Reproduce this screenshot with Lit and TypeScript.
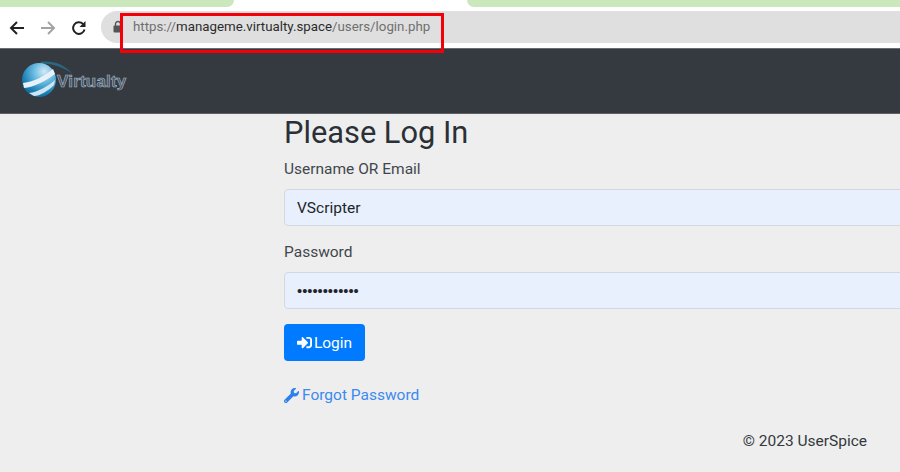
import { LitElement, html, css } from "lit";
import { customElement } from "lit/decorators.js";

@customElement("app-root")
export class AppRoot extends LitElement {
  static styles = css`
    :host {
      display: flex;
      flex-direction: column;
      width: 900px;
      height: 472px;
      overflow: hidden;
      position: relative;
      background: #eeeeee;
      font-family: Roboto, "Liberation Sans", sans-serif;
      color: #343a40;
    }
    .tabs {
      display: flex;
      justify-content: space-between;
      height: 7px;
      background: #fff;
      flex: none;
    }
    .tab {
      height: 7px;
      background: #cbe8bd;
    }
    .tab.left {
      width: 234px;
      border-bottom-right-radius: 7px;
    }
    .tab.right {
      width: 433px;
      border-bottom-left-radius: 7px;
    }
    .toolbar {
      display: flex;
      align-items: center;
      height: 41px;
      background: #fff;
      flex: none;
      padding-left: 9px;
      box-sizing: border-box;
    }
    .nav-icon {
      width: 16px;
      height: 16px;
      flex: none;
      margin-right: 15px;
    }
    .omnibox {
      flex: 1;
      height: 32px;
      margin-top: -2px;
      margin-left: -1px;
      background: #dfdfdf;
      border-radius: 16px 0 0 16px;
      display: flex;
      align-items: center;
      padding-left: 12px;
      font-size: 13.3px;
      color: #6f6f6f;
    }
    .lock {
      width: 10px;
      height: 13px;
      margin-right: 10px;
      flex: none;
    }
    .omnibox b {
      font-weight: 400;
      color: #2c2c2c;
    }
    .navbar {
      height: 66px;
      flex: none;
      box-sizing: border-box;
      background: #343a40;
      border-top: 1px solid #6a6e73;
      border-bottom: 1px solid #5c6065;
      display: flex;
      align-items: center;
      padding: 0 0 3px 20px;
    }
    .globe {
      width: 52px;
      height: 40px;
      flex: none;
      margin-right: -15px;
    }
    .brand {
      font-family: "Liberation Sans", sans-serif;
      font-size: 17px;
      font-weight: 700;
      color: #4a5663;
      letter-spacing: 0.2px;
      -webkit-text-stroke: 0.6px #a9bccd;
      padding-top: 4px;
    }
    main {
      padding-left: 284px;
      width: 1000px;
      box-sizing: border-box;
      flex: none;
      font-size: 15.5px;
    }
    h1 {
      margin: 0;
      font-size: 30.8px;
      font-weight: 400;
      line-height: 38px;
      color: #2b3036;
    }
    label {
      display: block;
      line-height: 24px;
      color: #41474d;
    }
    .username-label {
      margin-top: 5px;
    }
    .field {
      height: 37px;
      margin-top: 8px;
      box-sizing: border-box;
      background: #e8f0fe;
      border: 1px solid #d3d8e0;
      border-radius: 4px;
      display: flex;
      align-items: center;
      padding-left: 12px;
      color: #212529;
    }
    .password-label {
      margin-top: 14px;
    }
    .dots {
      font-family: "Liberation Sans", sans-serif;
      font-size: 14.7px;
    }
    .login {
      margin-top: 15px;
      width: 81px;
      height: 37px;
      background: #007bff;
      border: none;
      border-radius: 4px;
      color: #fff;
      font: inherit;
      display: flex;
      align-items: center;
      justify-content: center;
      gap: 2px;
      padding: 0;
    }
    .login svg {
      width: 15px;
      height: 15px;
    }
    .forgot {
      margin-top: 22px;
      display: flex;
      align-items: center;
      gap: 3px;
      line-height: 24px;
      color: #3b8af0;
    }
    .forgot svg {
      width: 15px;
      height: 15px;
    }
    footer {
      margin-top: 22px;
      padding-right: 33px;
      text-align: right;
      font-size: 15.5px;
      line-height: 24px;
      color: #33383d;
    }
    .highlight {
      position: absolute;
      left: 120px;
      top: 13px;
      width: 324px;
      height: 40px;
      box-sizing: border-box;
      border: 3px solid #f40009;
    }
  `;

  render() {
    return html`
      <div class="tabs">
        <div class="tab left"></div>
        <div class="tab right"></div>
      </div>
      <div class="toolbar">
        <svg class="nav-icon" viewBox="0 0 16 16" fill="none" stroke="#222" stroke-width="2">
          <path d="M15 8H2M8 2 2 8l6 6" />
        </svg>
        <svg class="nav-icon" viewBox="0 0 16 16" fill="none" stroke="#a3a3a3" stroke-width="2">
          <path d="M1 8h13M8 2l6 6-6 6" />
        </svg>
        <svg class="nav-icon" viewBox="0 0 16 16" fill="none" stroke="#222" stroke-width="2">
          <path d="M13.500 9.500A5.800 5.800 0 1 1 12 4" />
          <path d="M14.500 1v6h-6z" fill="#222" stroke="none" />
        </svg>
        <div class="omnibox">
          <svg class="lock" viewBox="0 0 10 13">
            <path d="M2.500 6V4a2.500 2.500 0 0 1 5 0v2" fill="none" stroke="#555" stroke-width="1.400" />
            <rect x="0.500" y="5.500" width="9" height="7" rx="1" fill="#555" />
          </svg>
          <span>https://<b>manageme.virtualty.space</b>/users/login.php</span>
        </div>
      </div>
      <div class="navbar">
        <svg class="globe" viewBox="0 0 52 40">
          <defs>
            <radialGradient id="g" cx="0.65" cy="0.25" r="0.85">
              <stop offset="0" stop-color="#d3e9f5" />
              <stop offset="0.35" stop-color="#6cbde3" />
              <stop offset="0.75" stop-color="#1a7fb5" />
              <stop offset="1" stop-color="#10608f" />
            </radialGradient>
          </defs>
          <path d="M20 2C32 0 44 4 53 14 44 8 32 3 22 4Z" fill="#2a6880" />
          <circle cx="19" cy="20" r="17" fill="url(#g)" />
          <path d="M3 23C14 22 26 15 33 9L35 14C26 21 14 27 4 28Z" fill="#e6f2f8" />
          <path d="M9 33C18 32 28 26 35 20L34 25C28 31 20 36 14 36Z" fill="#cfe6f2" />
        </svg>
        <span class="brand">Virtualty</span>
      </div>
      <main>
        <h1>Please Log In</h1>
        <label class="username-label">Username OR Email</label>
        <div class="field">VScripter</div>
        <label class="password-label">Password</label>
        <div class="field"><span class="dots">••••••••••••</span></div>
        <button class="login">
          <svg viewBox="0 0 512 512" fill="#fff">
            <path d="M416 448h-84c-6.600 0-12-5.400-12-12v-40c0-6.600 5.400-12 12-12h84c17.700 0 32-14.300 32-32V160c0-17.700-14.300-32-32-32h-84c-6.600 0-12-5.400-12-12V76c0-6.600 5.400-12 12-12h84c53 0 96 43 96 96v192c0 53-43 96-96 96zm-47-201L201 79c-15-15-41-4.500-41 17v96H24c-13.300 0-24 10.700-24 24v96c0 13.300 10.700 24 24 24h136v96c0 21.500 26 32 41 17l168-168c9.300-9.400 9.300-24.600 0-34z" />
          </svg>
          <span>Login</span>
        </button>
        <div class="forgot">
          <svg viewBox="0 0 512 512" fill="#2f80ed">
            <path d="M507.700 109.100c-2.200-9-13.500-12.100-20.100-5.500l-74.400 74.400-67.900-11.300-11.300-67.900 74.400-74.400c6.600-6.600 3.400-17.900-5.700-20.200-47.400-11.700-99.600.9-136.600 37.900-39.600 39.600-50.700 97.100-34.100 147.200L18.700 402.800c-25 25-25 65.500 0 90.500 25 25 65.500 25 90.500 0l213.200-213.200c50.100 16.700 107.500 5.500 147.300-34.300 37.100-37.100 49.700-89.300 38-136.700zM64 472c-13.200 0-24-10.800-24-24 0-13.300 10.700-24 24-24s24 10.700 24 24c0 13.200-10.700 24-24 24z" />
          </svg>
          <span>Forgot Password</span>
        </div>
      </main>
      <footer>© 2023 UserSpice</footer>
      <div class="highlight"></div>
    `;
  }
}
